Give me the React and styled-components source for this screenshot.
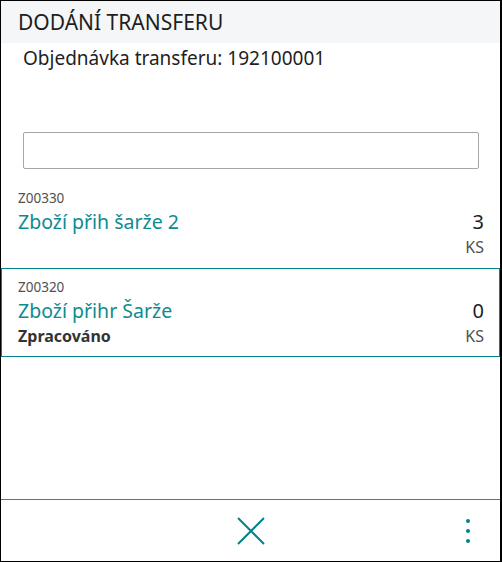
import React from "react";
import styled, { createGlobalStyle } from "styled-components";

const Global = createGlobalStyle`
  body {
    margin: 0;
    background: #fff;
    font-family: "Noto Sans", "Open Sans", sans-serif;
  }
`;

const Frame = styled.div`
  width: 502px;
  height: 562px;
  box-sizing: border-box;
  border: 1px solid #000;
  border-right-width: 2px;
  display: flex;
  flex-direction: column;
  background: #fff;
`;

const Header = styled.div`
  height: 42px;
  background: #f5f6f8;
  display: flex;
  align-items: center;
  padding-left: 17px;
  font-size: 21px;
  color: #1e1e1e;
`;

const Subtitle = styled.div`
  margin-top: 3px;
  padding-left: 22px;
  font-size: 19px;
  line-height: 24px;
  color: #1e1e1e;
`;

const Search = styled.input`
  margin: 62px 21px 0 22px;
  height: 37px;
  box-sizing: border-box;
  border: 1px solid #a6a6a6;
  border-radius: 2px;
  outline: none;
  font: inherit;
`;

const List = styled.div`
  flex: 1;
  margin-top: 10px;
`;

const Item = styled.div`
  border: 1px solid ${(p) => (p.$selected ? "#00838a" : "transparent")};
  padding: 8px 15px 9px 16px;
`;

const Code = styled.div`
  font-size: 13.5px;
  line-height: 20px;
  color: #505050;
`;

const Row = styled.div`
  display: flex;
  justify-content: space-between;
  align-items: baseline;
`;

const Name = styled.span`
  font-size: 19.5px;
  line-height: 28px;
  color: #0f8a90;
`;

const Qty = styled.span`
  font-size: 20px;
  line-height: 28px;
  color: #1e1e1e;
`;

const Status = styled.span`
  font-size: 16px;
  line-height: 22px;
  font-weight: 700;
  color: #333;
`;

const Unit = styled.span`
  font-size: 16px;
  line-height: 22px;
  color: #505050;
  margin-left: auto;
`;

const Footer = styled.div`
  height: 61px;
  border-top: 1px solid #707070;
  display: grid;
  grid-template-columns: 1fr auto 1fr;
  align-items: center;
`;

const IconButton = styled.button`
  background: none;
  border: 0;
  padding: 0;
  display: flex;
  align-items: center;
  justify-content: center;
  cursor: pointer;
  justify-self: ${(p) => p.$align || "center"};
  margin-right: ${(p) => p.$mr || 0}px;
`;

const items = [
  { code: "Z00330", name: "Zboží přih šarže 2", qty: 3, unit: "KS" },
  { code: "Z00320", name: "Zboží přihr Šarže", qty: 0, unit: "KS", status: "Zpracováno", selected: true },
];

export default function App() {
  return (
    <>
      <Global />
      <Frame>
        <Header>DODÁNÍ TRANSFERU</Header>
        <Subtitle>Objednávka transferu: 192100001</Subtitle>
        <Search />
        <List>
          {items.map((it) => (
            <Item key={it.code} $selected={it.selected}>
              <Code>{it.code}</Code>
              <Row>
                <Name>{it.name}</Name>
                <Qty>{it.qty}</Qty>
              </Row>
              <Row>
                {it.status && <Status>{it.status}</Status>}
                <Unit>{it.unit}</Unit>
              </Row>
            </Item>
          ))}
        </List>
        <Footer>
          <span />
          <IconButton aria-label="Zavřít">
            <svg width="28" height="28" viewBox="0 0 28 28">
              <path d="M1 1 L27 27 M27 1 L1 27" stroke="#00838a" strokeWidth="2" fill="none" />
            </svg>
          </IconButton>
          <IconButton $align="end" $mr={29} aria-label="Více">
            <svg width="6" height="26" viewBox="0 0 6 26">
              <circle cx="3" cy="3" r="2" fill="#00838a" />
              <circle cx="3" cy="13" r="2" fill="#00838a" />
              <circle cx="3" cy="23" r="2" fill="#00838a" />
            </svg>
          </IconButton>
        </Footer>
      </Frame>
    </>
  );
}
